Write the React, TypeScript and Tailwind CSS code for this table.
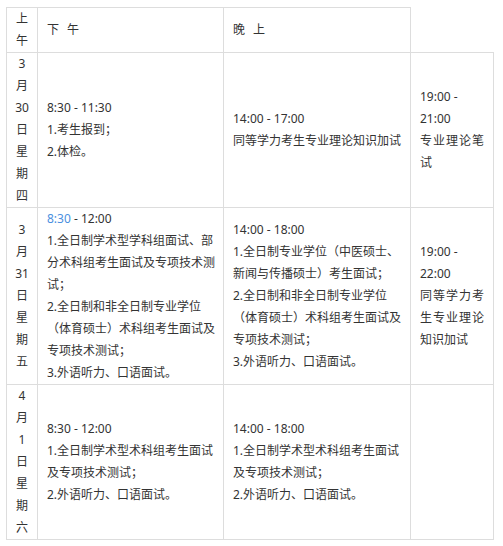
import React from "react";

const td = "border border-[#dddddd] align-middle px-[9px] py-0";
const c1 = "border border-[#dddddd] align-middle text-center px-0 py-0";

function Lines({ lines }: { lines: React.ReactNode[] }) {
  return (
    <>
      {lines.map((l, i) => (
        <div key={i} className="whitespace-nowrap">
          {l}
        </div>
      ))}
    </>
  );
}

export default function App() {
  return (
    <div className="w-[503px] h-[546px] bg-white pl-[6px] pt-[7px] font-['Noto_Sans','Noto_Sans_CJK_SC',sans-serif] text-[12px] leading-[22px] text-[#333333]">
      <table className="table-fixed border-collapse w-[487px]">
        <colgroup>
          <col className="w-[31px]" />
          <col className="w-[186px]" />
          <col className="w-[187px]" />
          <col className="w-[83px]" />
        </colgroup>
        <tbody>
          <tr>
            <td className={c1}>
              <Lines lines={["上", "午"]} />
            </td>
            <td className={td}>
              下<span className="ml-[8px]">午</span>
            </td>
            <td className={td}>
              晚<span className="ml-[8px]">上</span>
            </td>
          </tr>
          <tr>
            <td className={c1}>
              <Lines lines={["3", "月", "30", "日", "星", "期", "四"]} />
            </td>
            <td className={td}>
              <Lines lines={["8:30 - 11:30", "1.考生报到；", "2.体检。"]} />
            </td>
            <td className={td}>
              <Lines lines={["14:00 - 17:00", "同等学力考生专业理论知识加试"]} />
            </td>
            <td className={td}>
              <Lines
                lines={[
                  "19:00 -",
                  "21:00",
                  <span className="tracking-[1px]">专业理论笔</span>,
                  "试",
                ]}
              />
            </td>
          </tr>
          <tr>
            <td className={c1}>
              <Lines lines={["3", "月", "31", "日", "星", "期", "五"]} />
            </td>
            <td className={td}>
              <Lines
                lines={[
                  <span>
                    <span className="text-[#4a8fe0]">8:30</span> - 12:00
                  </span>,
                  "1.全日制学术型学科组面试、部",
                  "分术科组考生面试及专项技术测",
                  "试；",
                  "2.全日制和非全日制专业学位",
                  "（体育硕士）术科组考生面试及",
                  "专项技术测试；",
                  "3.外语听力、口语面试。",
                ]}
              />
            </td>
            <td className={td}>
              <Lines
                lines={[
                  "14:00 - 18:00",
                  "1.全日制专业学位（中医硕士、",
                  "新闻与传播硕士）考生面试；",
                  "2.全日制和非全日制专业学位",
                  "（体育硕士）术科组考生面试及",
                  "专项技术测试；",
                  "3.外语听力、口语面试。",
                ]}
              />
            </td>
            <td className={td}>
              <Lines
                lines={[
                  "19:00 -",
                  "22:00",
                  <span className="tracking-[1px]">同等学力考</span>,
                  <span className="tracking-[1px]">生专业理论</span>,
                  "知识加试",
                ]}
              />
            </td>
          </tr>
          <tr>
            <td className={c1}>
              <Lines lines={["4", "月", "1", "日", "星", "期", "六"]} />
            </td>
            <td className={td}>
              <Lines
                lines={[
                  "8:30 - 12:00",
                  "1.全日制学术型术科组考生面试",
                  "及专项技术测试；",
                  "2.外语听力、口语面试。",
                ]}
              />
            </td>
            <td className={td}>
              <Lines
                lines={[
                  "14:00 - 18:00",
                  "1.全日制学术型术科组考生面试",
                  "及专项技术测试；",
                  "2.外语听力、口语面试。",
                ]}
              />
            </td>
            <td className={td}></td>
          </tr>
        </tbody>
      </table>
    </div>
  );
}
